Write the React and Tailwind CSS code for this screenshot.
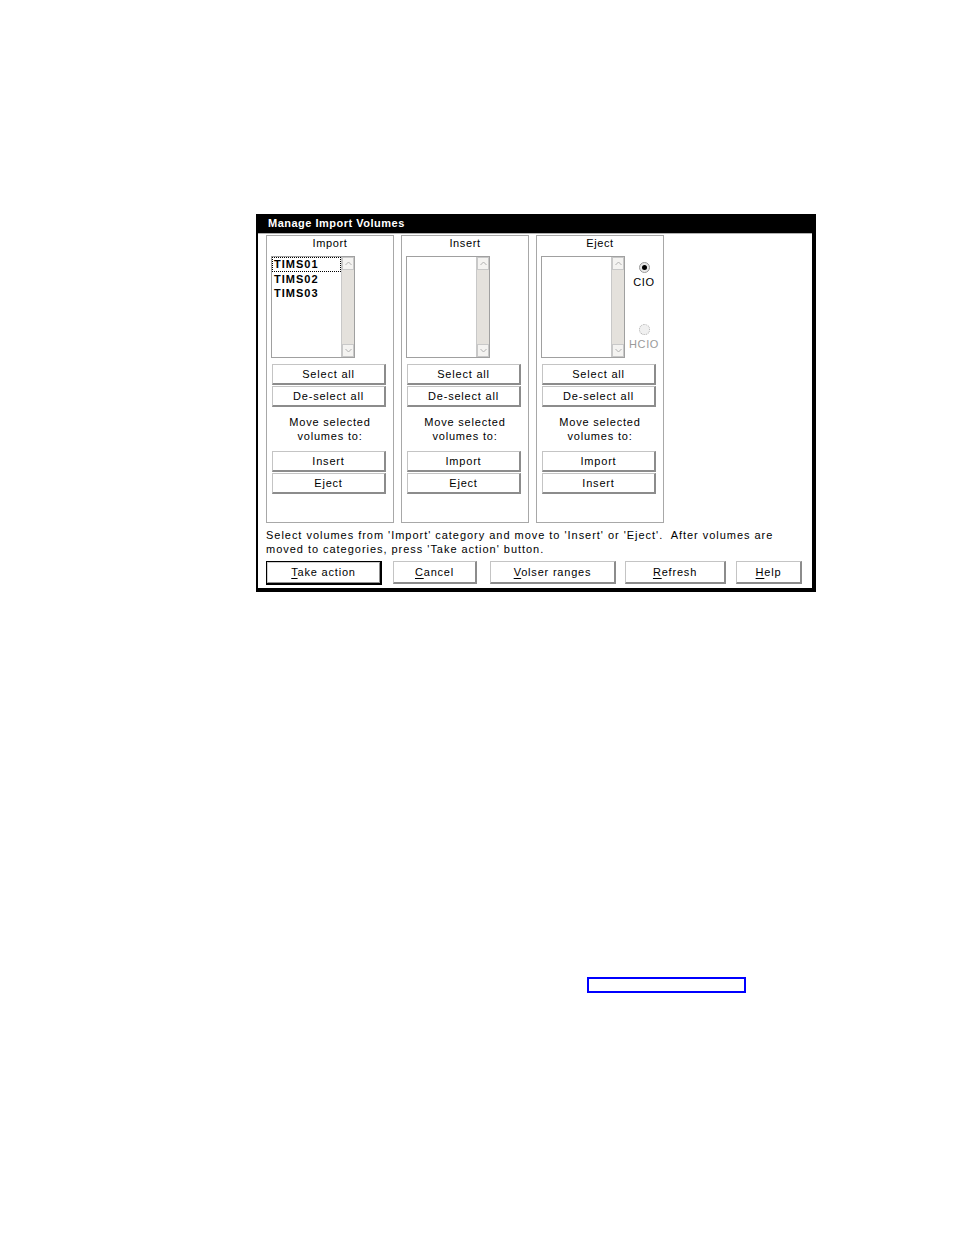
import React from "react";

function Btn({ children, className = "" }) {
  return (
    <div
      className={
        "flex items-center justify-center bg-white border border-[#c4c4c4] border-r-2 border-b-2 border-r-[#8c8c8c] border-b-[#8c8c8c] text-[11px] leading-none tracking-[0.8px] text-black " +
        className
      }
    >
      {children}
    </div>
  );
}

function ListBox({ items = [] }) {
  return (
    <div className="flex w-[84px] h-[102px] border border-[#a0a0a0] bg-white">
      <div className="flex-1 flex flex-col pt-0">
        {items.map((it, i) => (
          <div
            key={it}
            className={
              "h-[14.5px] leading-[14px] pl-[2px] text-[11px] font-bold tracking-[1px] text-black " +
              (i === 0 ? "outline outline-1 outline-dotted outline-black -outline-offset-1" : "")
            }
          >
            {it}
          </div>
        ))}
      </div>
      <div className="w-[13px] flex flex-col justify-between bg-[#e4e1dc] border-l border-[#c8c8c8]">
        <div className="h-[13px] bg-[#f4f3f1] border border-[#c8c8c8] flex items-center justify-center">
          <svg width="7" height="5" viewBox="0 0 7 5">
            <path d="M0.5 4 L3.5 1 L6.5 4" fill="none" stroke="#b0b0b0" strokeWidth="1" />
          </svg>
        </div>
        <div className="h-[13px] bg-[#f4f3f1] border border-[#c8c8c8] flex items-center justify-center">
          <svg width="7" height="5" viewBox="0 0 7 5">
            <path d="M0.5 1 L3.5 4 L6.5 1" fill="none" stroke="#b0b0b0" strokeWidth="1" />
          </svg>
        </div>
      </div>
    </div>
  );
}

function Group({ title, items, a, b, extra }) {
  return (
    <div className="w-[128px] h-[288px] border border-[#a8a8a8] flex flex-col">
      <div className="h-[14px] leading-[14px] text-center text-[11px] tracking-[0.6px] text-black">
        {title}
      </div>
      <div className="flex mt-[6px] ml-[4px]">
        <ListBox items={items} />
        {extra}
      </div>
      <Btn className="mt-[6px] ml-[5px] w-[114px] h-[21px]">Select all</Btn>
      <Btn className="mt-[1px] ml-[5px] w-[114px] h-[21px]">De-select all</Btn>
      <div className="mt-[8px] text-center text-[11px] leading-[14px] tracking-[0.8px] text-black">
        <div>Move selected</div>
        <div>volumes to:</div>
      </div>
      <Btn className="mt-[8px] ml-[5px] w-[114px] h-[21px]">{a}</Btn>
      <Btn className="mt-[1px] ml-[5px] w-[114px] h-[21px]">{b}</Btn>
    </div>
  );
}

function Radios() {
  return (
    <div className="flex-1 flex flex-col items-center">
      <div className="mt-[6px] w-[11px] h-[11px] rounded-full border border-[#9a9a9a] bg-[#e8e8e8] flex items-center justify-center">
        <div className="w-[5px] h-[5px] rounded-full bg-black" />
      </div>
      <div className="mt-[2px] h-[14px] leading-[14px] text-[11px] tracking-[0.6px] text-black">CIO</div>
      <div className="mt-[35px] w-[11px] h-[11px] rounded-full border border-dotted border-[#b0b0b0] bg-[#f0f0f0]" />
      <div className="mt-[2px] h-[14px] leading-[14px] text-[11px] tracking-[0.6px] text-[#9a9a9a]">HCIO</div>
    </div>
  );
}

function U({ c }) {
  return <span className="underline underline-offset-2">{c}</span>;
}

export default function App() {
  return (
    <div className="w-[954px] min-h-[1235px] bg-white font-['Liberation_Sans',Arial,sans-serif]">
      <div className="pt-[214px] pl-[256px]">
        <div className="w-[560px] bg-black pl-[2px] pr-[4px] pb-[4px] flex flex-col">
          <div className="h-[19px] leading-[19px] pl-[10px] text-white text-[11px] font-bold tracking-[0.5px]">
            Manage Import Volumes
          </div>
          <div className="h-[355px] bg-white border-t border-[#b0b0b0] flex flex-col">
            <div className="flex gap-[7px] mt-[1px] ml-[8px]">
              <Group title="Import" items={["TIMS01", "TIMS02", "TIMS03"]} a="Insert" b="Eject" />
              <Group title="Insert" items={[]} a="Import" b="Eject" />
              <Group title="Eject" items={[]} a="Import" b="Insert" extra={<Radios />} />
            </div>
            <div className="mt-[5px] ml-[8px] text-[11px] leading-[14px] tracking-[0.97px] text-black whitespace-pre">
              <div>{"Select volumes from 'Import' category and move to 'Insert' or 'Eject'.  After volumes are"}</div>
              <div>{"moved to categories, press 'Take action' button."}</div>
            </div>
            <div className="flex mt-[5px] ml-[8px]">
              <div className="w-[116px] h-[24px] border border-black border-r-2 border-b-2 flex">
                <div className="flex-1 flex items-center justify-center bg-white border border-[#d0d0d0] border-r-[#909090] border-b-[#909090] text-[11px] tracking-[0.8px] text-black">
                  <span><U c="T" />ake action</span>
                </div>
              </div>
              <Btn className="ml-[11px] w-[84px] h-[23px]"><span><U c="C" />ancel</span></Btn>
              <Btn className="ml-[13px] w-[126px] h-[23px]"><span><U c="V" />olser ranges</span></Btn>
              <Btn className="ml-[9px] w-[101px] h-[23px]"><span><U c="R" />efresh</span></Btn>
              <Btn className="ml-[10px] w-[66px] h-[23px]"><span><U c="H" />elp</span></Btn>
            </div>
          </div>
        </div>
        <div className="mt-[385px] ml-[331px] w-[159px] h-[16px] border-2 border-[#0000ff]" />
      </div>
    </div>
  );
}
